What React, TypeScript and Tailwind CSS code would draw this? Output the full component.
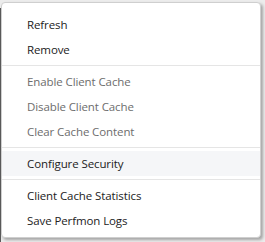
import React from 'react';

type Item = { label: string; disabled?: boolean; active?: boolean } | 'sep';

const items: Item[] = [
  { label: 'Refresh' },
  { label: 'Remove' },
  'sep',
  { label: 'Enable Client Cache', disabled: true },
  { label: 'Disable Client Cache', disabled: true },
  { label: 'Clear Cache Content', disabled: true },
  'sep',
  { label: 'Configure Security', active: true },
  'sep',
  { label: 'Client Cache Statistics' },
  { label: 'Save Perfmon Logs' },
];

const App = () => {
  return (
    <div className="relative w-[265px] h-[242px] bg-[#ececec] overflow-hidden" style={{ fontFamily: '"Open Sans", "Noto Sans", sans-serif' }}>
      {/* window edge behind the menu */}
      <div className="absolute left-0 top-[8px] bottom-0 w-[1px] bg-[#5b5b5b]" />
      <div className="relative ml-[1px] mt-[2px] w-[260px] h-[236px] bg-white border border-[#cfcfcf] rounded-[4px] shadow-[2px_2px_3px_rgba(0,0,0,0.3)] pt-[9px]">
        {items.map((item, index) =>
          item === 'sep' ? (
            <div key={index} className="h-[1px] bg-[#e5e5e5] my-[3px]" />
          ) : (
            <div
              key={index}
              className={`h-[25px] flex items-center pl-[25px] text-[11.5px] tracking-[-0.1px] ${
                item.disabled ? 'text-[#6d6d6d]' : 'text-[#222]'
              } ${item.active ? 'bg-[#f5f6f8]' : ''}`}
            >
              {item.label}
            </div>
          )
        )}
      </div>
    </div>
  );
};

export default App;
